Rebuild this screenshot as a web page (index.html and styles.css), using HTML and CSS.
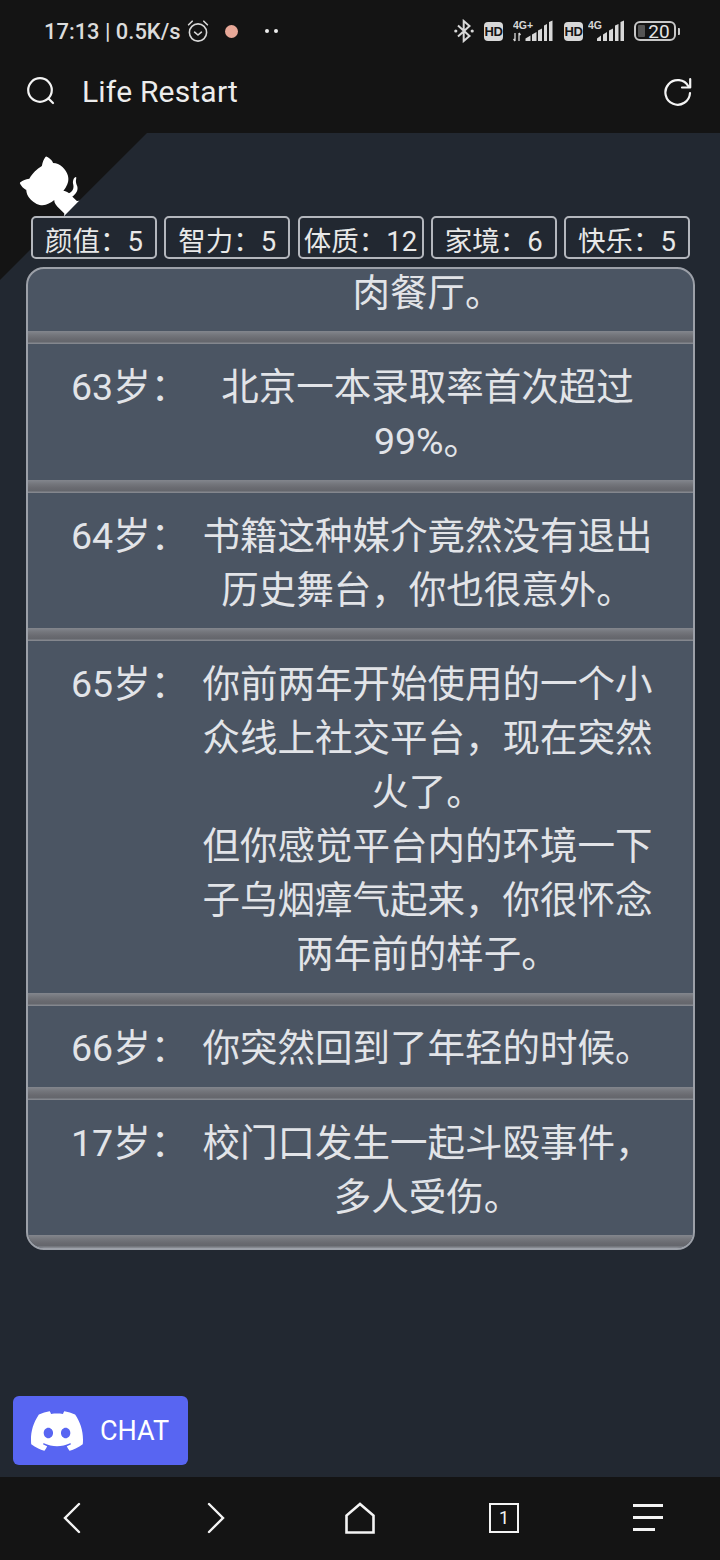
FILE: index.html
```html
<!DOCTYPE html>
<html lang="zh-CN">
<head>
<meta charset="utf-8">
<title>Life Restart</title>
<link rel="stylesheet" href="styles.css">
</head>
<body>
<div class="app">
  <header class="chrome-top">
    <div class="status-bar">
      <div class="status-left">
        <span class="clock">17:13 | 0.5K/s</span>
        <svg class="ic-alarm" viewBox="0 0 22 24" width="22" height="24" fill="none" stroke="#d8d8d8" stroke-width="1.6" stroke-linecap="round" stroke-linejoin="round"><circle cx="11" cy="13.5" r="8.6"/><path d="M7.6 13.2l3.4 2.8 3.4-2.8M1.6 5.8 5.2 2.2M20.4 5.8 16.8 2.2"/></svg>
        <span class="rec-dot"></span>
        <span class="mini-dots"><i></i><i></i></span>
      </div>
      <div class="status-right">
        <svg class="ic-bt" viewBox="0 0 20 24" width="20" height="24" fill="none" stroke="#d8d8d8" stroke-width="2"><path d="M4 6.500 15.500 17l-5.800 5V2l5.800 5L4 17.500"/><circle cx="1.800" cy="12" r="1.600" fill="#d8d8d8" stroke="none"/><circle cx="18.200" cy="12" r="1.600" fill="#d8d8d8" stroke="none"/></svg>
        <span class="hd">HD</span>
        <span class="sig sig-plus">
          <svg viewBox="0 0 40 24" width="40" height="24"><text class="sig-txt" x="0" y="9.500">4G+</text><path class="sig-arrows" d="M2 14v8M.5 20l1.500 2M6 22v-8M6 14l1.500 2"/><path class="sig-bars" d="M12.500 22v-2.500l5-3V22zM19 22v-6.500l4.500-2.500v9zM25 22V11.500l4-2V22zM31 22V6.500l3-1.500V22zM36 22V3l3.500-1.500V22z"/></svg>
        </span>
        <span class="hd">HD</span>
        <span class="sig sig-plain">
          <svg viewBox="0 0 36 24" width="36" height="24"><text class="sig-txt" x="0" y="9.500">4G</text><path class="sig-bars" d="M9 22v-2.500l4-3V22zM15 22v-6.500l4-2.500v9zM21 22V11.500l4-2V22zM27 22V6.500l3.500-1.500V22zM32.500 22V3L36 1.500V22z"/></svg>
        </span>
        <span class="battery"><span class="battery-fill"></span><span class="battery-num">20</span></span><span class="battery-tip"></span>
      </div>
    </div>
    <div class="title-bar">
      <svg class="ic-search" viewBox="0 0 28 28" width="28" height="28" fill="none" stroke="#f4f4f4" stroke-width="2.200" stroke-linecap="round"><circle cx="13" cy="13" r="11.800"/><path d="M21.500 21.500 26 26"/></svg>
      <span class="page-title">Life Restart</span>
      <svg class="ic-reload" viewBox="0 0 30 30" width="30" height="30" fill="none" stroke="#f4f4f4" stroke-width="2.200" stroke-linecap="round" stroke-linejoin="round"><path d="M25.500 10.500A12.300 12.300 0 1 0 27 17"/><path d="M19 11.500h8.200V3.200"/></svg>
    </div>
  </header>

  <main class="game">
    <svg class="corner" viewBox="0 0 250 250" width="147" height="147"><path class="corner-bg" d="M0,0 L115,115 L130,115 L142,142 L250,250 L250,0 Z"/><path class="corner-cat" d="M128.3,109.0 C113.8,99.7 119.0,89.6 119.0,89.6 C122.0,82.7 120.5,78.6 120.5,78.6 C119.2,72.0 123.4,76.3 123.4,76.3 C127.3,80.9 125.5,87.3 125.5,87.3 C122.9,97.6 130.6,101.9 134.4,103.2"/><path class="corner-cat" d="M115.0,115.0 C114.9,115.1 118.7,116.5 119.8,115.4 L133.7,101.6 C136.9,99.2 139.9,98.4 142.2,98.6 C133.8,88.0 127.5,74.4 143.8,58.0 C148.5,53.4 154.0,51.2 159.7,51.0 C160.3,49.4 163.2,43.6 171.4,40.1 C171.4,40.1 176.1,42.5 178.8,56.2 C183.1,58.6 187.2,61.8 190.9,65.4 C194.5,69.0 197.7,73.2 200.1,77.6 C213.8,80.2 216.3,84.9 216.3,84.9 C212.7,93.1 206.9,96.0 205.4,96.6 C205.1,102.4 203.0,107.8 198.3,112.5 C181.9,128.9 168.3,122.5 157.7,114.1 C157.9,116.9 156.7,120.9 152.7,124.9 L141.0,136.5 C139.8,137.7 141.6,141.9 141.8,141.8 Z"/></svg>

    <div class="stats">
      <div class="stat">颜值：5</div>
      <div class="stat">智力：5</div>
      <div class="stat">体质：12</div>
      <div class="stat">家境：6</div>
      <div class="stat">快乐：5</div>
    </div>

    <div class="log">
      <div class="log-scroll">
        <div class="entry"><span class="age"></span><span class="text">肉餐厅。</span></div>
        <div class="entry"><span class="age">63岁：</span><span class="text">北京一本录取率首次超过99%。</span></div>
        <div class="entry"><span class="age">64岁：</span><span class="text">书籍这种媒介竟然没有退出历史舞台，你也很意外。</span></div>
        <div class="entry"><span class="age">65岁：</span><span class="text">你前两年开始使用的一个小众线上社交平台，现在突然火了。<br>但你感觉平台内的环境一下子乌烟瘴气起来，你很怀念两年前的样子。</span></div>
        <div class="entry"><span class="age">66岁：</span><span class="text">你突然回到了年轻的时候。</span></div>
        <div class="entry"><span class="age">17岁：</span><span class="text">校门口发生一起斗殴事件，多人受伤。</span></div>
      </div>
    </div>

    <a class="chat">
      <svg viewBox="0 0 24 24" width="52" height="52"><path fill="#fff" d="M20.317 4.3698a19.7913 19.7913 0 00-4.8851-1.5152.0741.0741 0 00-.0785.0371c-.211.3753-.4447.8648-.6083 1.2495-1.8447-.2762-3.68-.2762-5.4868 0-.1636-.3933-.4058-.8742-.6177-1.2495a.077.077 0 00-.0785-.037 19.7363 19.7363 0 00-4.8852 1.515.0699.0699 0 00-.0321.0277C.5334 9.0458-.319 13.5799.0992 18.0578a.0824.0824 0 00.0312.0561c2.0528 1.5076 4.0413 2.4228 5.9929 3.0294a.0777.0777 0 00.0842-.0276c.4616-.6304.8731-1.2952 1.226-1.9942a.076.076 0 00-.0416-.1057c-.6528-.2476-1.2743-.5495-1.8722-.8923a.077.077 0 01-.0076-.1277c.1258-.0943.2517-.1923.3718-.2914a.0743.0743 0 01.0776-.0105c3.9278 1.7933 8.18 1.7933 12.0614 0a.0739.0739 0 01.0785.0095c.1202.099.246.1981.3728.2924a.077.077 0 01-.0066.1276 12.2986 12.2986 0 01-1.873.8914.0766.0766 0 00-.0407.1067c.3604.698.7719 1.3628 1.225 1.9932a.076.076 0 00.0842.0286c1.961-.6067 3.9495-1.5219 6.0023-3.0294a.077.077 0 00.0313-.0552c.5004-5.177-.8382-9.6739-3.5485-13.6604a.061.061 0 00-.0312-.0286zM8.02 15.3312c-1.1825 0-2.1569-1.0857-2.1569-2.419 0-1.3332.9555-2.4189 2.157-2.4189 1.2108 0 2.1757 1.0952 2.1568 2.419 0 1.3332-.9555 2.4189-2.1569 2.4189zm7.9748 0c-1.1825 0-2.1569-1.0857-2.1569-2.419 0-1.3332.9554-2.4189 2.1569-2.4189 1.2108 0 2.1757 1.0952 2.1568 2.419 0 1.3332-.946 2.4189-2.1568 2.4189Z"/></svg>
      <span class="chat-label">CHAT</span>
    </a>
  </main>

  <nav class="nav">
    <span class="nav-cell"><svg viewBox="0 0 20 32" width="20" height="32" class="nav-ic"><path d="M17 2 3 16l14 14"/></svg></span>
    <span class="nav-cell"><svg viewBox="0 0 20 32" width="20" height="32" class="nav-ic"><path d="M3 2l14 14L3 30"/></svg></span>
    <span class="nav-cell"><svg viewBox="0 0 30 32" width="30" height="32" class="nav-ic nav-home"><path d="M1.500 30.500V13.500L15 2l13.500 11.500v17z"/></svg></span>
    <span class="nav-cell"><span class="tab-count">1</span></span>
    <span class="nav-cell"><span class="menu"><i></i><i></i><i class="short"></i></span></span>
  </nav>
</div>
</body>
</html>
```
FILE: styles.css
```css
* { box-sizing: border-box; }
html, body { margin: 0; padding: 0; background: #141414; }
.app {
  width: 720px;
  height: 1560px;
  display: flex;
  flex-direction: column;
  overflow: hidden;
  font-family: Roboto, "Noto Sans CJK SC", sans-serif;
}

/* top chrome */
.chrome-top { background: #141414; height: 133px; flex: none; }
.status-bar {
  height: 62px;
  display: flex;
  align-items: center;
  justify-content: space-between;
  padding: 0 40px 0 44px;
}
.status-left { display: flex; align-items: center; }
.clock { font-size: 21.900px; font-weight: 500; color: #dcdcdc; white-space: nowrap; }
.ic-alarm { margin-left: 7px; }
.rec-dot { width: 13px; height: 13px; border-radius: 50%; background: #e8a898; margin-left: 16px; }
.mini-dots { display: flex; gap: 5px; margin-left: 27px; }
.mini-dots i { width: 4px; height: 4px; border-radius: 50%; background: #eee; }
.status-right { display: flex; align-items: center; }
.hd {
  width: 19px; height: 19px;
  border-radius: 4px;
  background: #d8d8d8;
  color: #141414;
  font: 700 13px/19px "Liberation Sans", sans-serif;
  text-align: center;
  letter-spacing: -.3px;
}
.ic-bt { margin-right: 10px; }
.sig { display: block; height: 24px; }
.sig svg { display: block; }
.sig-plus { margin: 0 11px 0 10px; }
.sig-plain { margin: 0 10px 0 5px; }
.sig-txt { font: 700 10.500px "Liberation Sans", sans-serif; fill: #d8d8d8; }
.sig-bars { fill: #d8d8d8; }
.sig-arrows { fill: none; stroke: #d8d8d8; stroke-width: 1.300; }
.battery {
  position: relative;
  width: 42px; height: 20px;
  border: 2.500px solid #c8c8c8;
  border-radius: 6px;
  display: flex; align-items: center; justify-content: center;
  padding-left: 8px;
}
.battery-fill { position: absolute; left: 2px; top: 2px; bottom: 2px; width: 7px; background: #555; border-radius: 1px; }
.battery-num { position: relative; font-size: 19px; color: #e4e4e4; line-height: 1; }
.battery-tip { width: 2.500px; height: 7px; background: #c8c8c8; margin-left: 1.500px; border-radius: 0 1px 1px 0; }

.title-bar {
  height: 58px;
  display: flex;
  align-items: center;
  padding: 0 27px;
}
.page-title { font-size: 30px; color: #ececec; margin-left: 27px; flex: 1; letter-spacing: .2px; }
.ic-search, .ic-reload { flex: none; }

/* game */
.game {
  position: relative;
  flex: 1;
  background: #222831;
  padding: 83px 25px 0 26px;
}
.corner { position: absolute; left: 0; top: 0; transform: scaleX(-1); }
.corner-bg { fill: #141414; }
.corner-cat { fill: #fff; }
.stats {
  position: relative;
  display: flex;
  gap: 7.250px;
  padding: 0 5px;
  margin-bottom: 8px;
}
.stat {
  flex: 1;
  height: 43px;
  border: 2px solid #b4b7bd;
  border-radius: 5px;
  background: #222831;
  color: #e8e8e8;
  font-size: 27.500px;
  padding-top: 3px;
  text-align: center;
  white-space: nowrap;
  display: flex;
  align-items: center;
  justify-content: center;
}

.log {
  position: relative;
  border: 2px solid #9ca0a8;
  border-radius: 18px;
  background: #4b5563;
  overflow: hidden;
}
.log-scroll { margin-top: -19px; }
.entry {
  display: flex;
  padding: 15.800px 40px 24.600px 43px;
  background: linear-gradient(to bottom, #83868d 0, #74767c 4px, #696a70 8px, #64666c 11px, #84878e 12px, #84878e 13px) bottom / 100% 13px no-repeat;
  color: #e2e4e8;
  font-size: 37.500px;
  line-height: 54px;
}
.age { flex: 0 0 131px; white-space: nowrap; }
.text { flex: 1; text-align: center; }

.chat {
  position: absolute;
  left: 13px;
  bottom: 12px;
  width: 175px;
  height: 69px;
  border-radius: 6px;
  background: #5865f2;
  display: flex;
  align-items: center;
  padding-left: 18px;
  gap: 17px;
}
.chat-label { font-size: 27px; color: #fff; }

/* bottom nav */
.nav {
  height: 83px;
  flex: none;
  background: #141414;
  display: grid;
  grid-template-columns: repeat(5, 144px);
  padding-bottom: 2px;
}
.nav-cell { display: flex; align-items: center; justify-content: center; }
.nav-ic { fill: none; stroke: #f4f4f4; stroke-width: 2.400; stroke-linecap: round; }
.nav-home { stroke-linecap: butt; stroke-width: 2.600; }
.tab-count {
  width: 30px; height: 30px;
  border: 2.500px solid #f4f4f4;
  color: #f4f4f4;
  font-size: 18px;
  display: flex; align-items: center; justify-content: center;
}
.menu { display: flex; flex-direction: column; gap: 9.500px; width: 30px; }
.menu i { display: block; height: 2.500px; background: #f4f4f4; }
.menu .short { width: 22px; }
```
